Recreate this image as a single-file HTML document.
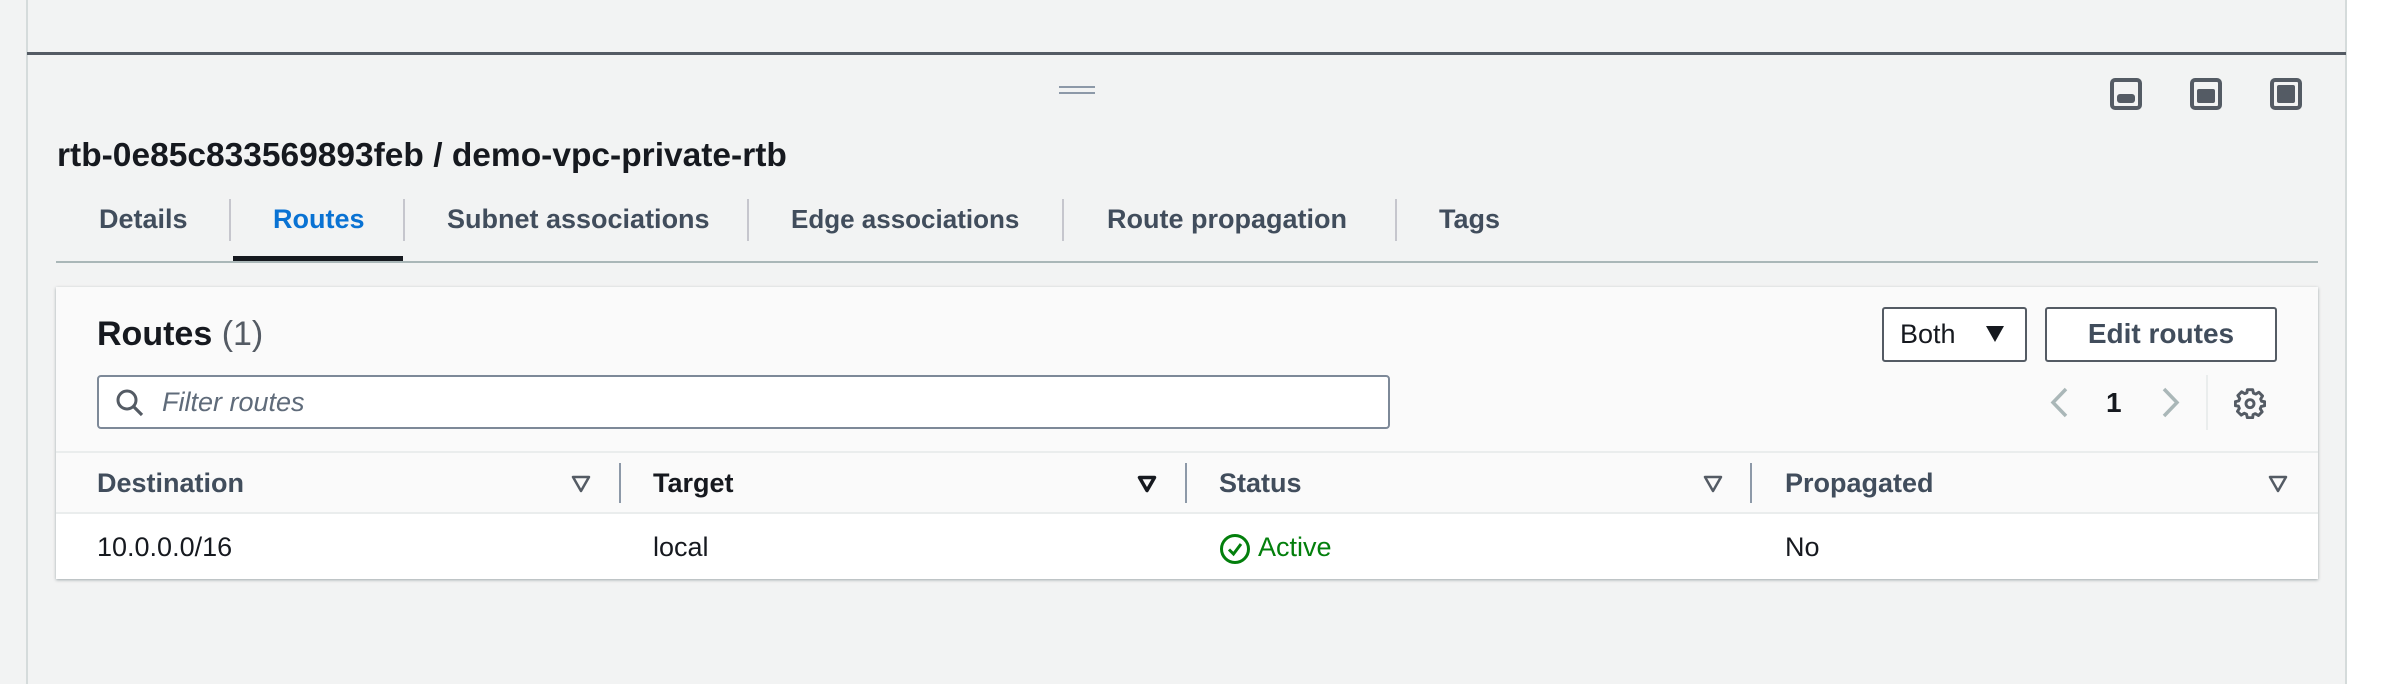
<!DOCTYPE html>
<html><head><meta charset="utf-8"><style>
*{margin:0;padding:0;box-sizing:border-box}
body{width:2406px;height:684px;background:#fff;position:relative;overflow:hidden;font-family:"Liberation Sans",sans-serif;color:#16191f}
.a{position:absolute}
.bg{left:0;top:0;width:2346px;height:684px;background:#f2f3f3}
.t{white-space:nowrap;line-height:1}
.tab{font-size:27px;font-weight:bold;color:#414d5c;top:206px}
.sep{width:2px;background:#c6c6cd}
.th{font-size:27px;font-weight:bold;color:#414d5c;top:470px}
.td{font-size:27px;top:534px;color:#16191f}
</style></head><body>
<div class="a bg"></div>
<div class="a" style="left:26px;top:0;width:2px;height:684px;background:#d5dbdb"></div>
<div class="a" style="left:2345px;top:0;width:2px;height:684px;background:#d5dbdb"></div>
<div class="a" style="left:27px;top:52px;width:2319px;height:3px;background:#545b64"></div>
<div class="a" style="left:1059px;top:86px;width:36px;height:2px;background:#8d99a8"></div>
<div class="a" style="left:1059px;top:92px;width:36px;height:2px;background:#8d99a8"></div>
<svg class="a" style="left:2110px;top:78px" width="200" height="33" viewBox="0 0 200 33">
<rect x="2" y="2" width="28" height="28" rx="3" fill="none" stroke="#545b64" stroke-width="4"/>
<rect x="7" y="16" width="18" height="9" rx="3" fill="#545b64"/>
<rect x="82" y="2" width="28" height="28" rx="3" fill="none" stroke="#545b64" stroke-width="4"/>
<rect x="87" y="11" width="18" height="14" rx="2" fill="#545b64"/>
<rect x="162" y="2" width="28" height="28" rx="3" fill="none" stroke="#545b64" stroke-width="4"/>
<rect x="167" y="7" width="18" height="18" rx="2" fill="#545b64"/>
</svg>
<div class="a t" style="left:57px;top:139px;font-size:33.5px;font-weight:bold">rtb-0e85c833569893feb / demo-vpc-private-rtb</div>
<div class="a t tab" style="left:99px">Details</div>
<div class="a t tab" style="left:273px;color:#0972d3">Routes</div>
<div class="a t tab" style="left:447px">Subnet associations</div>
<div class="a t tab" style="left:791px;font-size:26px">Edge associations</div>
<div class="a t tab" style="left:1107px">Route propagation</div>
<div class="a t tab" style="left:1439px">Tags</div>
<div class="a sep" style="left:229px;top:199px;height:42px"></div>
<div class="a sep" style="left:403px;top:199px;height:42px"></div>
<div class="a sep" style="left:747px;top:199px;height:42px"></div>
<div class="a sep" style="left:1062px;top:199px;height:42px"></div>
<div class="a sep" style="left:1395px;top:199px;height:42px"></div>
<div class="a" style="left:56px;top:261px;width:2262px;height:2px;background:#aab7b8"></div>
<div class="a" style="left:233px;top:256px;width:170px;height:5px;background:#16191f"></div>
<div class="a" style="left:56px;top:287px;width:2262px;height:292px;background:#fafafa;box-shadow:0 1px 3px rgba(0,28,36,.35)"></div>
<div class="a" style="left:56px;top:513px;width:2262px;height:66px;background:#fff"></div>
<div class="a" style="left:56px;top:451px;width:2262px;height:2px;background:#eaeded"></div>
<div class="a" style="left:56px;top:512px;width:2262px;height:2px;background:#eaeded"></div>
<div class="a t" style="left:97px;top:317px;font-size:34px;font-weight:bold">Routes <span style="font-weight:normal;color:#545b64">(1)</span></div>
<div class="a" style="left:97px;top:375px;width:1293px;height:54px;border:2px solid #7d8998;border-radius:4px;background:#fff"></div>
<svg class="a" style="left:115px;top:388px" width="30" height="30" viewBox="0 0 30 30"><circle cx="12" cy="12" r="9" fill="none" stroke="#545b64" stroke-width="3"/><path d="M18.5 18.5L27 27" stroke="#545b64" stroke-width="3.2"/></svg>
<div class="a t" style="left:162px;top:389px;font-size:27px;font-style:italic;color:#5f6b7a">Filter routes</div>
<div class="a" style="left:1882px;top:307px;width:145px;height:55px;border:2px solid #545b64;border-radius:3px;background:#fff"></div>
<div class="a t" style="left:1900px;top:321px;font-size:27px">Both</div>
<svg class="a" style="left:1985px;top:325px" width="20" height="18"><path d="M1 1H19L10 17Z" fill="#16191f"/></svg>
<div class="a" style="left:2045px;top:307px;width:232px;height:55px;border:2px solid #545b64;border-radius:3px;background:#fff"></div>
<div class="a t" style="left:2045px;width:232px;text-align:center;top:320px;font-size:28px;font-weight:bold;color:#414d5c">Edit routes</div>
<svg class="a" style="left:2049px;top:387px" width="20" height="31"><path d="M17 2L4 15.5L17 29" fill="none" stroke="#aab7b8" stroke-width="3.5"/></svg>
<div class="a t" style="left:2106px;top:389px;font-size:28px;font-weight:bold">1</div>
<svg class="a" style="left:2161px;top:387px" width="20" height="31"><path d="M3 2L16 15.5L3 29" fill="none" stroke="#aab7b8" stroke-width="3.5"/></svg>
<div class="a sep" style="left:2206px;top:375px;height:55px;background:#eaeded"></div>
<svg class="a" style="left:2234px;top:387px" width="32" height="32" viewBox="0 0 24 24"><path d="M10 2h4l.6 2.6 1.7.7 2.3-1.4 2.8 2.8-1.4 2.3.7 1.7L23 11v3l-2.6.6-.7 1.7 1.4 2.3-2.8 2.8-2.3-1.4-1.7.7L14 23h-4l-.6-2.6-1.7-.7-2.3 1.4-2.8-2.8 1.4-2.3-.7-1.7L1 14v-3l2.6-.6.7-1.7-1.4-2.3 2.8-2.8 2.3 1.4 1.7-.7Z" fill="none" stroke="#545b64" stroke-width="2.2" stroke-linejoin="round"/><circle cx="12" cy="12.5" r="3" fill="none" stroke="#545b64" stroke-width="2.2"/></svg>
<div class="a t th" style="left:97px">Destination</div>
<div class="a t th" style="left:653px;color:#16191f">Target</div>
<div class="a t th" style="left:1219px">Status</div>
<div class="a t th" style="left:1785px">Propagated</div>
<svg class="a" style="left:571px;top:474px" width="20" height="20"><path d="M2 3H18L10 17Z" fill="none" stroke="#545b64" stroke-width="2.5" stroke-linejoin="round"/></svg>
<svg class="a" style="left:1137px;top:474px" width="20" height="20"><path d="M2.5 3.5H17.5L10 16.5Z" fill="none" stroke="#16191f" stroke-width="3.5" stroke-linejoin="round"/></svg>
<svg class="a" style="left:1703px;top:474px" width="20" height="20"><path d="M2 3H18L10 17Z" fill="none" stroke="#545b64" stroke-width="2.5" stroke-linejoin="round"/></svg>
<svg class="a" style="left:2268px;top:474px" width="20" height="20"><path d="M2 3H18L10 17Z" fill="none" stroke="#545b64" stroke-width="2.5" stroke-linejoin="round"/></svg>
<div class="a sep" style="left:619px;top:463px;height:40px;background:#8d99a8"></div>
<div class="a sep" style="left:1185px;top:463px;height:40px;background:#8d99a8"></div>
<div class="a sep" style="left:1750px;top:463px;height:40px;background:#8d99a8"></div>
<div class="a t td" style="left:97px">10.0.0.0/16</div>
<div class="a t td" style="left:653px">local</div>
<svg class="a" style="left:1219px;top:533px" width="32" height="32" viewBox="0 0 32 32"><circle cx="16" cy="16" r="13.5" fill="none" stroke="#037f0c" stroke-width="3"/><path d="M10 16.5L14.5 21L22 11" fill="none" stroke="#037f0c" stroke-width="3"/></svg>
<div class="a t td" style="left:1258px;color:#037f0c">Active</div>
<div class="a t td" style="left:1785px">No</div>
</body></html>
